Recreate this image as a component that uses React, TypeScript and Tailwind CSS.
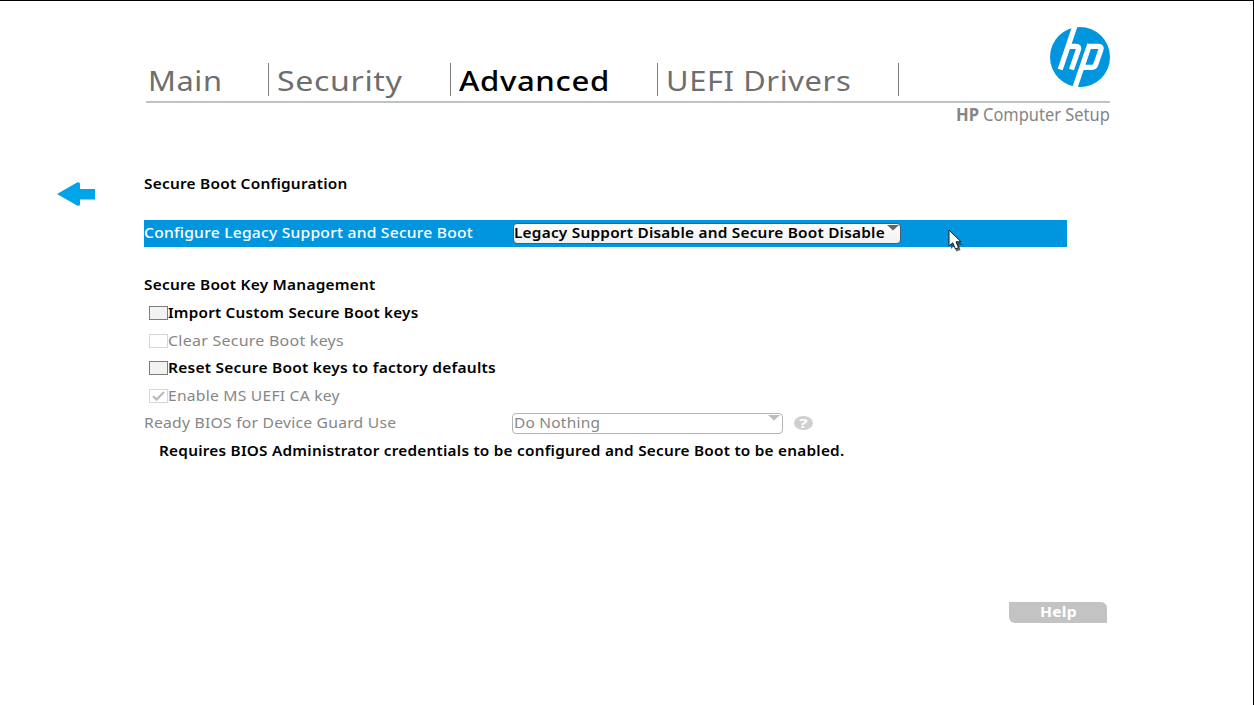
import { useLayoutEffect, useRef, useState } from "react";

type LabelProps = { text: string; width: number; className?: string };

/* Text stretched horizontally to a given width, as the firmware's display mode does. */
function Label({ text, width, className = "" }: LabelProps) {
  const ref = useRef<HTMLSpanElement>(null);
  const [scale, setScale] = useState(1);
  useLayoutEffect(() => {
    if (ref.current) setScale(width / ref.current.offsetWidth);
  }, [text, width]);
  return (
    <span className="block shrink-0 text-left" style={{ width }}>
      <span
        ref={ref}
        className={`inline-block origin-left whitespace-nowrap ${className}`}
        style={{ transform: `scaleX(${scale})` }}
      >
        {text}
      </span>
    </span>
  );
}

function Tab({ text, width, className, active }: LabelProps & { active?: boolean }) {
  return (
    <div className={`flex h-[33px] shrink-0 items-center border-r border-[#808080] pt-[7px] ${className}`}>
      <Label
        text={text}
        width={width}
        className={
          active
            ? "text-[27px] font-medium tracking-[0.02em] text-black"
            : "text-[27px] tracking-[0.02em] text-[#6e6e6e]"
        }
      />
    </div>
  );
}

function Checkbox({ disabled, checked }: { disabled?: boolean; checked?: boolean }) {
  return (
    <span
      className={`flex h-[14px] w-[19px] shrink-0 items-center justify-center border ${
        disabled ? "border-[#d6d6d6] bg-white" : "border-[#7c7c7c] bg-[#f2f2f2]"
      }`}
    >
      {checked && (
        <svg width="13" height="10" viewBox="0 0 13 10" fill="none">
          <path d="M1 5 4.5 8.5 12 1" stroke="#bdbdbd" strokeWidth="2.4" />
        </svg>
      )}
    </span>
  );
}

function Option({ text, width, disabled, checked }: LabelProps & { disabled?: boolean; checked?: boolean }) {
  return (
    <div className="flex h-[27.5px] items-center pl-[5px]">
      <Checkbox disabled={disabled} checked={checked} />
      <Label
        text={text}
        width={width}
        className={disabled ? "text-[#868686]" : "font-semibold text-black"}
      />
    </div>
  );
}

function Caret({ className }: { className: string }) {
  return (
    <svg width="12" height="6" viewBox="0 0 12 6" className={`mt-px shrink-0 self-start ${className}`}>
      <path d="M0 0H12L6 5.5Z" fill="currentColor" />
    </svg>
  );
}

export default function App() {
  return (
    <div className="relative flex h-[705px] w-[1254px] flex-col overflow-hidden border-t border-r border-black bg-white font-['Noto_Sans',sans-serif] text-[14px] leading-5 tracking-[0.015em]">
      <header className="ml-[146px] flex h-[126px] w-[964px] flex-col">
        <div className="flex h-[102px] items-start justify-between border-b-2 border-[#bcc3c3]">
          <nav className="flex pt-[62px]">
            <Tab text="Main" width={74} className="w-[123px] pl-[2px]" />
            <Tab text="Security" width={126} className="w-[182px] pl-[8px]" />
            <Tab text="Advanced" width={151} className="w-[207px] pl-[8px]" active />
            <Tab text="UEFI Drivers" width={185} className="w-[241px] pl-[8px]" />
          </nav>
          <svg width="60" height="60" viewBox="0 0 60 60" className="mt-[26px]">
            <circle cx="30" cy="30" r="30" fill="#0096df" />
            <g fill="none" stroke="#fff" strokeWidth="5.2">
              <path d="M25.3-2 10.2 42.5M18 19.3H26Q29.5 19.3 28.3 23L21.5 42.5" />
              <path d="M39.8 17 24.8 61M37.5 19.3H48.5Q52 19.3 50.8 23L45.8 37.5Q44.9 40.3 42 40.3H31" />
            </g>
          </svg>
        </div>
        <div className="mt-px flex justify-end gap-[4px] text-[18px] leading-5 tracking-normal text-[#858585]">
          <Label text="HP" width={23} className="font-bold" />
          <Label text="Computer Setup" width={127} />
        </div>
      </header>

      <main className="flex">
        <div className="w-[144px] pt-[54px] pl-[56px]">
          <svg width="39" height="26" viewBox="0 0 39 26">
            <path
              d="M1 13 21 1.5Q24 .3 24 3V8H39V18.5H24V23Q24 25.7 21 24.5Z"
              fill="#00a4e8"
            />
          </svg>
        </div>
        <section className="flex w-[923px] flex-col pt-[47px]">
          <Label text="Secure Boot Configuration" width={203.5} className="font-semibold" />
          <div className="mt-[26px] flex h-[27px] items-center bg-[#0096df]">
            <Label
              text="Configure Legacy Support and Secure Boot"
              width={329}
              className="relative -top-px font-medium text-white"
            />
            <div className="ml-[40px] flex h-[21px] w-[388px] items-center justify-between rounded-[4px] border border-[#45616e] bg-linear-to-b from-white to-[#f0f0f0] pr-[1px]">
              <Label
                text="Legacy Support Disable and Secure Boot Disable"
                width={371}
                className="relative -top-px font-semibold text-black"
              />
              <Caret className="text-[#666666]" />
            </div>
          </div>
          <div className="mt-[28px] flex">
            <Label text="Secure Boot Key Management" width={232} className="font-semibold" />
          </div>
          <div className="mt-[4.5px]">
            <Option text="Import Custom Secure Boot keys" width={250.5} />
            <Option text="Clear Secure Boot keys" width={176} disabled />
            <Option text="Reset Secure Boot keys to factory defaults" width={328} />
            <Option text="Enable MS UEFI CA key" width={172} disabled checked />
          </div>
          <div className="flex h-[27.5px] items-center">
            <Label text="Ready BIOS for Device Guard Use" width={252} className="text-[#868686]" />
            <div className="ml-[116px] flex h-[21px] w-[271px] items-center justify-between rounded-[4px] border border-[#b4b4b4] pr-[2px] pl-[1px]">
              <Label text="Do Nothing" width={86} className="text-[#868686]" />
              <Caret className="text-[#bdbdbd]" />
            </div>
            <div className="ml-[11px] flex h-[14px] w-[19px] items-center justify-center rounded-[50%] bg-[#cfcfcf]">
              <Label text="?" width={9} className="text-[12px] leading-[14px] font-bold text-white" />
            </div>
          </div>
          <div className="flex h-[27.5px] items-center pl-[15px]">
            <Label
              text="Requires BIOS Administrator credentials to be configured and Secure Boot to be enabled."
              width={685}
              className="font-semibold"
            />
          </div>
        </section>
      </main>

      <footer className="mt-[137.5px] ml-[1009px] flex h-[21px] w-[98px] items-center justify-center rounded-tr-[6px] rounded-bl-[6px] bg-[#c3c3c3]">
        <Label text="Help" width={37} className="relative -top-px font-bold text-white" />
      </footer>

      <svg width="15" height="23" viewBox="0 0 15 23" className="absolute top-[228px] left-[948px]">
        <path d="M3 4V20L6 17 8.5 22.5 12.5 21 11 16H14.5Z" fill="#33474f" opacity=".8" />
        <path
          d="M1 1V17L4.7 13.8 7.5 20 10.5 18.7 8 12.8H13Z"
          fill="#fff"
          stroke="#1c1c1c"
          strokeWidth="1"
        />
      </svg>
    </div>
  );
}
